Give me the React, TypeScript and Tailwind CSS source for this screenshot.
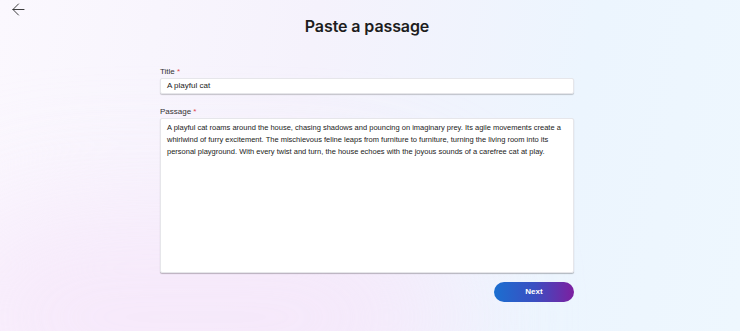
import { ArrowLeft } from "lucide-react"

// lines as they wrap in the textarea
const passageLines = [
  "A playful cat roams around the house, chasing shadows and pouncing on imaginary prey. Its agile movements create a",
  "whirlwind of furry excitement. The mischievous feline leaps from furniture to furniture, turning the living room into its",
  "personal playground. With every twist and turn, the house echoes with the joyous sounds of a carefree cat at play.",
]

const App = () => {
  return (
    <div className="relative h-[331px] w-full overflow-hidden bg-[linear-gradient(100deg,#fbf8fe_0%,#f5f2fc_40%,#ecf5fe_75%,#eef7fe_100%)] font-['Liberation_Sans',sans-serif] text-[#1f1f24]">
      {/* soft pink glow bottom left */}
      <div className="pointer-events-none absolute -bottom-24 -left-16 h-[220px] w-[520px] rounded-full bg-[#f6e6fa] opacity-80 blur-3xl" />

      <div className="relative flex flex-col pr-[6px]">
        {/* Top bar */}
        <div className="flex h-0 items-start">
          <button className="ml-[9px] mt-[0px] text-[#222]">
            <ArrowLeft size={19} strokeWidth={1.1} />
          </button>
        </div>

        <h1 className="mt-[16px] text-center font-['Inter',sans-serif] text-[16px] font-semibold leading-[20px] tracking-[-0.1px] text-[#1d1d20]">
          Paste a passage
        </h1>

        {/* Form */}
        <div className="mx-auto mt-[31px] flex w-[414px] flex-col">
          <label className="block text-[8px] leading-[10px] text-[#333]">
            Title <span className="text-[#e0454d]">*</span>
          </label>
          <div className="mt-[1px] flex h-[16px] items-center rounded-[2px] border border-[#e6e6ea] bg-white px-[6px] text-[8px] text-[#222] shadow-[0_1px_1px_rgba(0,0,0,0.2)]">
            A playful cat
          </div>

          <label className="mt-[13px] block text-[8px] leading-[10px] text-[#333]">
            Passage <span className="text-[#e0454d]">*</span>
          </label>
          <div className="mt-[1px] h-[155px] overflow-hidden rounded-[2px] border border-[#e6e6ea] bg-white px-[6px] py-[3px] text-[7.5px] leading-[12px] text-[#222] shadow-[0_1px_1px_rgba(0,0,0,0.25)]">
            {passageLines.map((line) => (
              <div key={line} className="whitespace-nowrap">
                {line}
              </div>
            ))}
          </div>

          <div className="mt-[9px] flex justify-end">
            <button className="flex h-[20px] w-[80px] items-center justify-center rounded-full bg-[linear-gradient(90deg,#1b6fd0,#3a4fc2_50%,#7d1fa0)] text-[8px] font-semibold text-white">
              Next
            </button>
          </div>
        </div>
      </div>
    </div>
  )
}

export default App
